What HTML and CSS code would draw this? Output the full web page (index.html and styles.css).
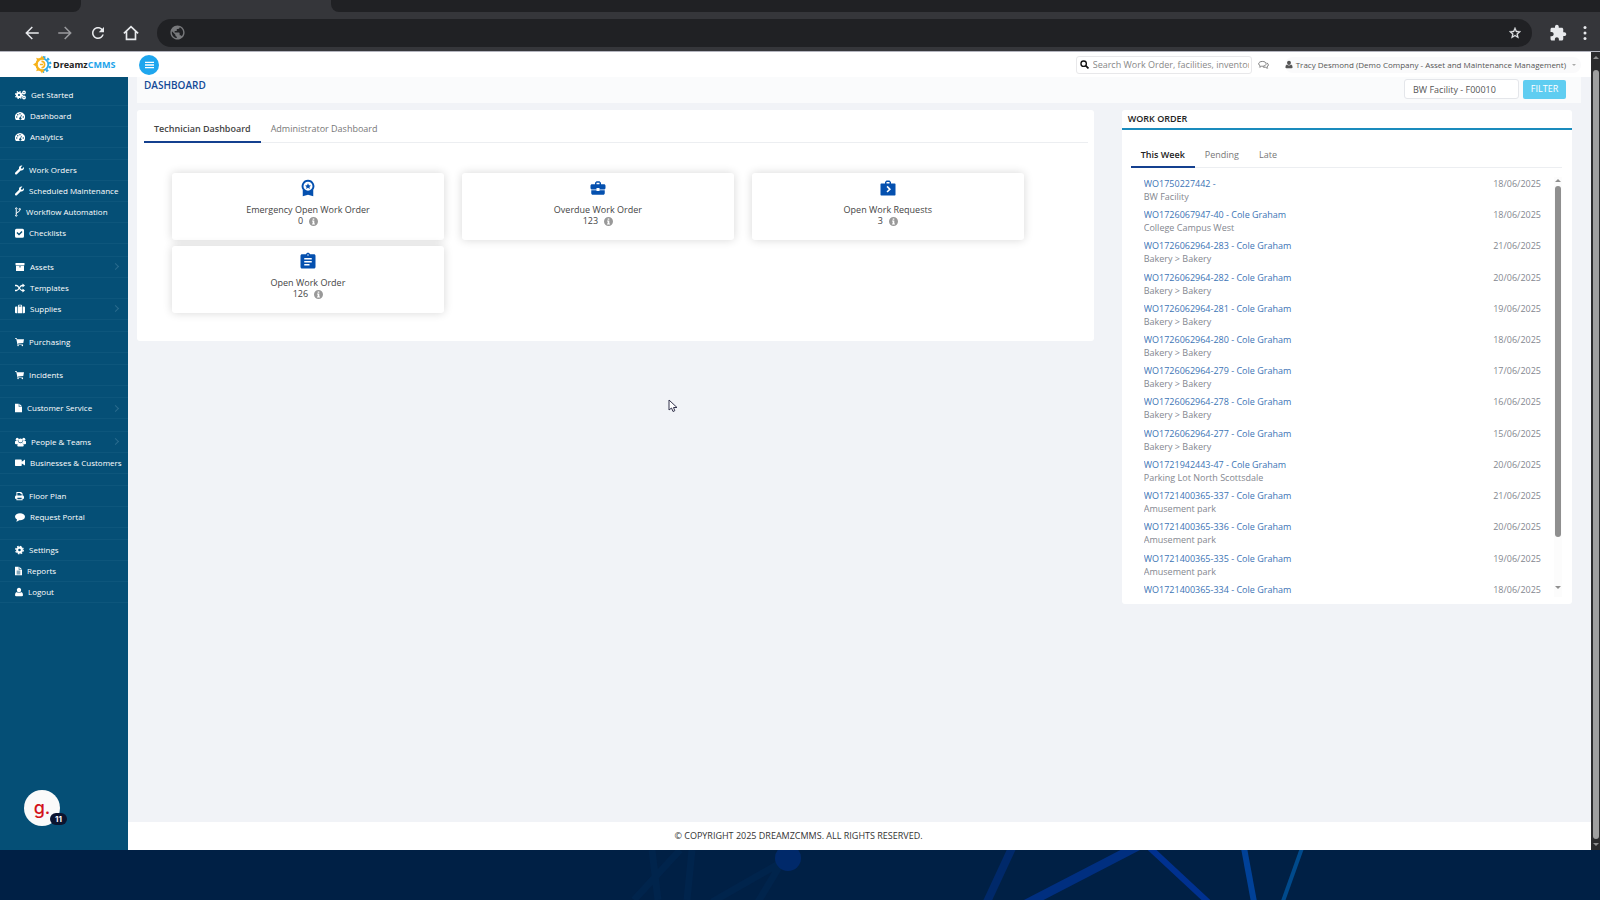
FILE: index.html
```
<!DOCTYPE html>
<html lang="en">
<head>
	<meta charset="UTF-8">
	<title>DreamzCMMS - Dashboard</title>
	<link rel="stylesheet" href="styles.css">
</head>
<body>
	<svg class="defs" aria-hidden="true">
		<symbol id="i-cogs" viewBox="0 0 22 20">
			<circle cx="8" cy="10" r="4.2" fill="none" stroke="currentColor" stroke-width="4"/>
			<circle cx="8" cy="10" r="7" fill="none" stroke="currentColor" stroke-width="2.4" stroke-dasharray="2.8 2.7"/>
			<circle cx="18" cy="5" r="2.5" fill="none" stroke="currentColor" stroke-width="2.6"/>
			<circle cx="18" cy="15" r="2.5" fill="none" stroke="currentColor" stroke-width="2.6"/>
		</symbol>
		<symbol id="i-dash" viewBox="0 0 20 20">
			<path fill="currentColor" fill-rule="evenodd" d="M10 2a10 10 0 0 0-8.500 15.500q.5.5 1 .5h15q.5 0 1-.5A10 10 0 0 0 10 2zM3.500 10.500a1.400 1.400 0 1 1 0 2.800 1.400 1.400 0 0 1 0-2.800zM5.500 6a1.400 1.400 0 1 1 0 2.800 1.400 1.400 0 0 1 0-2.800zM10 4a1.400 1.400 0 1 1 0 2.800A1.400 1.400 0 0 1 10 4zM16.500 10.500a1.400 1.400 0 1 1 0 2.800 1.400 1.400 0 0 1 0-2.800zM12.300 7.500l1.300.4-1.700 5.200a2.300 2.300 0 1 1-1.300-.4z"/>
		</symbol>
		<symbol id="i-wrench" viewBox="0 0 512 512">
			<path fill="currentColor" d="M507.730 109.100c-2.240-9.030-13.540-12.090-20.120-5.510l-74.360 74.360-67.880-11.310-11.310-67.880 74.360-74.360c6.620-6.620 3.430-17.900-5.660-20.160-47.380-11.740-99.550.91-136.580 37.930-39.640 39.640-50.550 97.100-34.050 147.200L18.740 402.760c-24.990 24.990-24.990 65.510 0 90.500 24.990 24.990 65.510 24.990 90.500 0l213.210-213.210c50.120 16.710 107.470 5.680 147.370-34.220 37.070-37.070 49.700-89.320 37.910-136.730z"/>
		</symbol>
		<symbol id="i-branch" viewBox="0 0 12 20">
			<g fill="none" stroke="currentColor" stroke-width="2"><circle cx="2.500" cy="3" r="1.500"/><circle cx="2.500" cy="17" r="1.500"/><circle cx="9.500" cy="4.500" r="1.500"/><path d="M2.500 5v10M9.500 6.500c0 4-6.500 3-7 7"/></g>
		</symbol>
		<symbol id="i-check" viewBox="0 0 18 20">
			<path fill="currentColor" fill-rule="evenodd" d="M3 1.500h12a3 3 0 0 1 3 3v12a3 3 0 0 1-3 3H3a3 3 0 0 1-3-3v-12a3 3 0 0 1 3-3zM3 10l5 5 7-7-2-2-5 5-3-3z"/>
		</symbol>
		<symbol id="i-archive" viewBox="0 0 20 20">
			<path fill="currentColor" fill-rule="evenodd" d="M1 2h18v4.500H1zM2 7.500h16V18H2zM8 9v1.600h4V9z"/>
		</symbol>
		<symbol id="i-random" viewBox="0 0 20 20">
			<path fill="none" stroke="currentColor" stroke-width="2.600" d="M0 5h3c5 0 6 10 11 10h2M0 15h3c5 0 6-10 11-10h2"/>
			<path fill="currentColor" d="M15 1l5 4-5 4zM15 11l5 4-5 4z"/>
		</symbol>
		<symbol id="i-case" viewBox="0 0 20 20">
			<path fill="currentColor" fill-rule="evenodd" d="M6 5V3q0-1.500 1.500-1.500h5Q14 1.500 14 3v2h.8v13.500H5.200V5zM7.600 5h4.800V3H7.600zM4 5v13.500H2q-2 0-2-2V7q0-2 2-2zM16 5v13.500h2q2 0 2-2V7q0-2-2-2z"/>
		</symbol>
		<symbol id="i-cart" viewBox="0 0 19 20">
			<path fill="currentColor" d="M0 2h4l.5 2H19l-1.500 8-11 1.200.3 1.300H17V16H5.300L2.800 3.600H0z"/>
			<circle cx="6.500" cy="17.500" r="1.600" fill="currentColor"/><circle cx="15.500" cy="17.500" r="1.600" fill="currentColor"/>
		</symbol>
		<symbol id="i-file" viewBox="0 0 15 20">
			<path fill="currentColor" d="M0 1h8v6.500h7V19H0zM9.300 1l5.700 5.300H9.300z"/>
		</symbol>
		<symbol id="i-filetext" viewBox="0 0 15 20">
			<path fill="currentColor" fill-rule="evenodd" d="M0 1h8v6.500h7V19H0zM9.300 1l5.700 5.300H9.300zM3.500 9.500V11h8V9.500zM3.500 12.500V14h8v-1.500zM3.500 15.500V17h8v-1.500z"/>
		</symbol>
		<symbol id="i-users" viewBox="0 0 22 20">
			<g fill="currentColor"><circle cx="4.500" cy="4.500" r="3"/><circle cx="17.500" cy="4.500" r="3"/><circle cx="11" cy="7" r="4"/><path d="M0 13V9q1-2 3-1.500h3.500q0 3.500 2 4.500-3.500.3-4 2.500H2q-2 0-2-1.500zM22 13V9q-1-2-3-1.500h-3.500q0 3.500-2 4.500 3.500.3 4 2.500H20q2 0 2-1.500zM4.500 17q0-5 4-5.500 2.500 1.500 5 0 4 .5 4 5.500 0 2-2 2h-9q-2 0-2-2z"/></g>
		</symbol>
		<symbol id="i-video" viewBox="0 0 20 20">
			<path fill="currentColor" d="M1 3h11q1.500 0 1.500 1.500v3L20 3v12l-6.500-4v3.500Q13.500 16 12 16H1q-1 0-1-1.500v-10Q0 3 1 3z"/>
		</symbol>
		<symbol id="i-print" viewBox="0 0 19 20">
			<path fill="currentColor" fill-rule="evenodd" d="M3 1.500h10L16 4.500V9q3 0 3 3v4h-3v3H3v-3H0v-4q0-3 3-3zM5 3.500V9h9V6h-2.500V3.500zM5 13.500V17h9v-3.500z"/>
		</symbol>
		<symbol id="i-comment" viewBox="0 0 20 20">
			<path fill="currentColor" d="M10 2.500c5.500 0 10 3 10 7s-4.500 7-10 7l-1.700-.1Q5.500 19 2 19.200q1.800-1.500 2-4Q0 13 0 9.500c0-4 4.500-7 10-7z"/>
		</symbol>
		<symbol id="i-cog" viewBox="0 0 18 20">
			<circle cx="9" cy="10" r="4.700" fill="none" stroke="currentColor" stroke-width="4.200"/>
			<circle cx="9" cy="10" r="7.500" fill="none" stroke="currentColor" stroke-width="2.600" stroke-dasharray="3.200 2.690"/>
		</symbol>
		<symbol id="i-user" viewBox="0 0 16 20">
			<path fill="currentColor" d="M8 1.500c2.500 0 4.300 2 4.300 4.500S10.500 11 8 11 3.700 8.500 3.700 6 5.500 1.500 8 1.500zM3.500 10q4.500 4 9 0 3.500 1 3.500 6 0 2.500-2.500 2.500h-11Q0 18.500 0 16q0-5 3.500-6z"/>
		</symbol>
		<symbol id="i-info" viewBox="0 0 20 20">
			<path fill="currentColor" fill-rule="evenodd" d="M10 0a10 10 0 1 1 0 20 10 10 0 0 1 0-20zM8.200 3.200v3h3.600v-3zM6.800 8v2h1.400v4.500H6.800v2h6.400v-2h-1.400V8z"/>
		</symbol>
		<symbol id="i-back" viewBox="0 0 24 24">
			<path fill="currentColor" d="M21 11H6.800l6.300-6.300L11.700 3.300 3 12l8.700 8.700 1.400-1.400L6.800 13H21z"/>
		</symbol>
	</svg>

	<header class="browser">
		<div class="tabstrip"><span class="tab-left"></span><span class="tab-active"></span><span class="tab-rest"></span></div>
		<div class="toolbar">
			<button class="nav-btn" aria-label="Back"><svg><use href="#i-back"/></svg></button>
			<button class="nav-btn forward" aria-label="Forward"><svg><use href="#i-back"/></svg></button>
			<button class="nav-btn" aria-label="Reload"><svg viewBox="0 0 24 24"><path fill="currentColor" d="M17.650 6.350C16.200 4.900 14.210 4 12 4c-4.420 0-7.990 3.580-7.990 8s3.570 8 7.990 8c3.730 0 6.840-2.550 7.730-6h-2.080c-.82 2.330-3.040 4-5.650 4-3.310 0-6-2.690-6-6s2.690-6 6-6c1.660 0 3.140.69 4.220 1.780L13 11h7V4l-2.350 2.350z"/></svg></button>
			<button class="nav-btn" aria-label="Home"><svg viewBox="0 0 24 24"><path fill="none" stroke="currentColor" stroke-width="2.200" d="M2.500 12.500L12 3.500l9.500 9M6 10v10.500h12V10"/></svg></button>
			<div class="urlbar">
				<svg class="globe" viewBox="0 0 24 24"><path fill="currentColor" d="M12 2C6.480 2 2 6.480 2 12s4.480 10 10 10 10-4.480 10-10S17.520 2 12 2zm-1 17.930c-3.950-.49-7-3.850-7-7.930 0-.62.08-1.210.21-1.790L9 15v1c0 1.100.9 2 2 2v1.930zm6.900-2.540c-.26-.81-1-1.390-1.900-1.390h-1v-3c0-.55-.45-1-1-1H8v-2h2c.55 0 1-.45 1-1V7h2c1.100 0 2-.9 2-2v-.41c2.930 1.190 5 4.060 5 7.410 0 2.080-.8 3.970-2.100 5.390z"/></svg>
				<svg class="star" viewBox="0 0 24 24"><path fill="currentColor" stroke="currentColor" stroke-width=".6" d="M22 9.240l-7.190-.62L12 2 9.190 8.630 2 9.240l5.460 4.730L5.820 21 12 17.270 18.180 21l-1.630-7.030L22 9.240zM12 15.400l-3.760 2.270 1-4.280-3.320-2.880 4.380-.38L12 6.100l1.710 4.040 4.380.38-3.320 2.880 1 4.280L12 15.400z"/></svg>
			</div>
			<svg class="ext" viewBox="0 0 24 24"><path fill="currentColor" d="M20.500 11H19V7c0-1.100-.9-2-2-2h-4V3.500C13 2.120 11.880 1 10.500 1S8 2.120 8 3.500V5H4c-1.100 0-1.990.9-1.990 2v3.800H3.500c1.490 0 2.700 1.210 2.700 2.700s-1.210 2.700-2.700 2.700H2V20c0 1.100.9 2 2 2h3.800v-1.500c0-1.490 1.210-2.700 2.700-2.700 1.490 0 2.700 1.210 2.700 2.700V22H17c1.100 0 2-.9 2-2v-4h1.500c1.380 0 2.500-1.120 2.500-2.500S21.880 11 20.500 11z"/></svg>
			<svg class="dots" viewBox="0 0 4 16"><g fill="currentColor"><circle cx="2" cy="2.500" r="1.500"/><circle cx="2" cy="8" r="1.500"/><circle cx="2" cy="13.500" r="1.500"/></g></svg>
		</div>
	</header>

	<div class="window">
		<div class="app">
			<div class="topbar">
				<a class="logo" href="#">
					<svg viewBox="0 0 36 36">
						<path fill="none" stroke="#29a9e8" stroke-width="3.500" d="M18 7a11 11 0 0 1 0 22"/>
						<path fill="none" stroke="#29a9e8" stroke-width="4" stroke-dasharray="4.500 3.800" d="M19 4a14 14 0 0 1 0 28"/>
						<path fill="none" stroke="#f6b21b" stroke-width="4.500" d="M21 7.500a11 11 0 1 0 0 21"/>
						<path fill="#f6b21b" d="M17 1l3 5h-6zM6 5l6 2-4 4zM0 18l6-4v8zM6 31l2-6 4 4zM17 35l-3-5h6z"/>
						<path fill="none" stroke="#f6b21b" stroke-width="3" d="M13 18h6M16 12a6 6 0 0 1 0 12"/>
					</svg>
					<span class="logo-dark">Dreamz</span><span class="logo-blue">CMMS</span>
				</a>
				<button class="menu" aria-label="Toggle menu"><svg viewBox="0 0 10 8"><path stroke="#fff" stroke-width="1.400" d="M0 1h10M0 4h10M0 7h10"/></svg></button>
				<label class="search">
					<svg viewBox="0 0 16 16"><circle cx="6.500" cy="6.500" r="4.800" fill="none" stroke="currentColor" stroke-width="2.400"/><path stroke="currentColor" stroke-width="3" d="M10 10l5 5"/></svg>
					<input type="text" aria-label="Search" placeholder="Search Work Order, facilities, inventor">
				</label>
				<svg class="chat" viewBox="0 0 20 16"><path fill="none" stroke="currentColor" stroke-width="1.500" d="M8 1.500c4 0 6.800 1.900 6.800 4.400S12 10.300 8 10.300l-1.500-.1q-1.500 1.500-3.700 1.700 1.200-1 1.200-2.500Q1.200 8 1.200 5.900C1.200 3.400 4 1.500 8 1.500z"/><path fill="none" stroke="currentColor" stroke-width="1.500" d="M16 4.200q2.800 1.300 2.800 3.600t-2.500 3.500q0 1.500 1.200 2.500-2.200-.2-3.700-1.700-3 .4-5-.7"/></svg>
				<button class="account">
					<svg><use href="#i-user"/></svg>
					<span>Tracy Desmond (Demo Company - Asset and Maintenance Management)</span>
					<i class="caret"></i>
				</button>
			</div>

			<div class="body">
				<aside class="sidebar">
					<nav>
						<ul>
							<li><a href="#"><svg width="11"><use href="#i-cogs"/></svg>Get Started</a></li>
							<li><a href="#"><svg width="10"><use href="#i-dash"/></svg>Dashboard</a></li>
							<li><a href="#"><svg width="10"><use href="#i-dash"/></svg>Analytics</a></li>
						</ul>
						<ul>
							<li><a href="#"><svg width="9"><use href="#i-wrench"/></svg>Work Orders</a></li>
							<li><a href="#"><svg width="9"><use href="#i-wrench"/></svg>Scheduled Maintenance</a></li>
							<li><a href="#"><svg width="6"><use href="#i-branch"/></svg>Workflow Automation</a></li>
							<li><a href="#"><svg width="9"><use href="#i-check"/></svg>Checklists</a></li>
						</ul>
						<ul>
							<li class="sub"><a href="#"><svg width="10"><use href="#i-archive"/></svg>Assets</a></li>
							<li><a href="#"><svg width="10"><use href="#i-random"/></svg>Templates</a></li>
							<li class="sub"><a href="#"><svg width="10"><use href="#i-case"/></svg>Supplies</a></li>
						</ul>
						<ul>
							<li><a href="#"><svg width="9"><use href="#i-cart"/></svg>Purchasing</a></li>
						</ul>
						<ul>
							<li><a href="#"><svg width="9"><use href="#i-cart"/></svg>Incidents</a></li>
						</ul>
						<ul>
							<li class="sub"><a href="#"><svg width="7"><use href="#i-file"/></svg>Customer Service</a></li>
						</ul>
						<ul>
							<li class="sub"><a href="#"><svg width="11"><use href="#i-users"/></svg>People &amp; Teams</a></li>
							<li><a href="#"><svg width="10"><use href="#i-video"/></svg>Businesses &amp; Customers</a></li>
						</ul>
						<ul>
							<li><a href="#"><svg width="9"><use href="#i-print"/></svg>Floor Plan</a></li>
							<li><a href="#"><svg width="10"><use href="#i-comment"/></svg>Request Portal</a></li>
						</ul>
						<ul>
							<li><a href="#"><svg width="9"><use href="#i-cog"/></svg>Settings</a></li>
							<li><a href="#"><svg width="7"><use href="#i-filetext"/></svg>Reports</a></li>
							<li><a href="#"><svg width="8"><use href="#i-user"/></svg>Logout</a></li>
						</ul>
					</nav>
					<button class="helper" aria-label="Help">g.<span class="badge">11</span></button>
				</aside>

				<main>
					<div class="titlebar">
						<h1>DASHBOARD</h1>
						<form class="filter">
							<input type="text" aria-label="Facility" value="BW Facility - F00010">
							<button type="button">FILTER</button>
						</form>
					</div>

					<div class="columns">
						<section class="panel tech">
							<div class="tabs">
								<button class="active">Technician Dashboard</button>
								<button>Administrator Dashboard</button>
							</div>
							<div class="cards">
								<div class="card">
									<svg viewBox="0 0 24 24"><path fill="currentColor" fill-rule="evenodd" d="M12 1a8.500 8.500 0 0 1 7 13.300V23l-7-2-7 2v-8.700A8.500 8.500 0 0 1 12 1zm0 2.500a6 6 0 1 0 0 12 6 6 0 0 0 0-12zm0 2.300l1.200 2.500 2.700.3-2 1.900.6 2.700-2.500-1.400-2.500 1.400.6-2.700-2-1.900 2.700-.3z"/></svg>
									<h2>Emergency Open Work Order</h2>
									<p>0 <svg><use href="#i-info"/></svg></p>
								</div>
								<div class="card">
									<svg viewBox="0 0 24 24"><path fill="currentColor" d="M10 16v-1H3.010L3 19c0 1.110.89 2 2 2h14c1.110 0 2-.89 2-2v-4h-7v1h-4zm10-9h-4.010V5l-2-2h-4l-2 2v2H4c-1.100 0-2 .9-2 2v3c0 1.110.89 2 2 2h6v-2h4v2h6c1.100 0 2-.9 2-2V9c0-1.100-.9-2-2-2zm-6 0h-4V5h4v2z"/></svg>
									<h2>Overdue Work Order</h2>
									<p>123 <svg><use href="#i-info"/></svg></p>
								</div>
								<div class="card">
									<svg viewBox="0 0 24 24"><path fill="currentColor" fill-rule="evenodd" d="M8 6V4l2-2h4l2 2v2h5q1 0 1 1v14q0 1-1 1H3q-1 0-1-1V7q0-1 1-1zm2 0h4V4h-4zm0 4.500l3 3-3 3 1.500 1.500 4.500-4.500L11.500 9z"/></svg>
									<h2>Open Work Requests</h2>
									<p>3 <svg><use href="#i-info"/></svg></p>
								</div>
								<div class="card">
									<svg viewBox="0 0 24 24"><path fill="currentColor" d="M20 3h-5.180C14.400 1.840 13.300 1 12 1c-1.300 0-2.400.84-2.820 2H4c-1.100 0-2 .9-2 2v15c0 1.100.9 2 2 2h16c1.100 0 2-.9 2-2V5c0-1.100-.9-2-2-2zm-8 0c.55 0 1 .45 1 1s-.45 1-1 1-1-.45-1-1 .45-1 1-1zm2 15H7v-2h7v2zm3-4H7v-2h10v2zm0-4H7V8h10v2z"/></svg>
									<h2>Open Work Order</h2>
									<p>126 <svg><use href="#i-info"/></svg></p>
								</div>
							</div>
						</section>

						<section class="panel orders">
							<h2 class="panel-title">WORK ORDER</h2>
							<div class="tabs">
								<button class="active">This Week</button>
								<button>Pending</button>
								<button>Late</button>
							</div>
							<div class="scroller">
								<ul class="order-list">
									<li><a href="#">WO1750227442 -</a><time>18/06/2025</time><p>BW Facility</p></li>
									<li><a href="#">WO1726067947-40 - Cole Graham</a><time>18/06/2025</time><p>College Campus West</p></li>
									<li><a href="#">WO1726062964-283 - Cole Graham</a><time>21/06/2025</time><p>Bakery &gt; Bakery</p></li>
									<li><a href="#">WO1726062964-282 - Cole Graham</a><time>20/06/2025</time><p>Bakery &gt; Bakery</p></li>
									<li><a href="#">WO1726062964-281 - Cole Graham</a><time>19/06/2025</time><p>Bakery &gt; Bakery</p></li>
									<li><a href="#">WO1726062964-280 - Cole Graham</a><time>18/06/2025</time><p>Bakery &gt; Bakery</p></li>
									<li><a href="#">WO1726062964-279 - Cole Graham</a><time>17/06/2025</time><p>Bakery &gt; Bakery</p></li>
									<li><a href="#">WO1726062964-278 - Cole Graham</a><time>16/06/2025</time><p>Bakery &gt; Bakery</p></li>
									<li><a href="#">WO1726062964-277 - Cole Graham</a><time>15/06/2025</time><p>Bakery &gt; Bakery</p></li>
									<li><a href="#">WO1721942443-47 - Cole Graham</a><time>20/06/2025</time><p>Parking Lot North Scottsdale</p></li>
									<li><a href="#">WO1721400365-337 - Cole Graham</a><time>21/06/2025</time><p>Amusement park</p></li>
									<li><a href="#">WO1721400365-336 - Cole Graham</a><time>20/06/2025</time><p>Amusement park</p></li>
									<li><a href="#">WO1721400365-335 - Cole Graham</a><time>19/06/2025</time><p>Amusement park</p></li>
									<li><a href="#">WO1721400365-334 - Cole Graham</a><time>18/06/2025</time></li>
								</ul>
								<div class="scrollbar"><i class="up"></i><span class="thumb"></span><i class="down"></i></div>
							</div>
						</section>
					</div>

					<footer>© COPYRIGHT 2025 DREAMZCMMS. ALL RIGHTS RESERVED.</footer>
				</main>
			</div>
		</div>
		<div class="scrollbar page-scroll"><i class="up"></i><span class="thumb"></span><i class="down"></i></div>
	</div>

	<svg class="backdrop" viewBox="0 0 1600 50" preserveAspectRatio="xMidYMid slice">
		<g fill="none">
			<path stroke="#00244c" stroke-width="7" d="M652 0l6 50M692 0l-5 50M782 12l-70 40M782 12l-24 40M680 0l-46 50"/>
			<circle cx="788" cy="8" r="13" fill="#00296a"/>
			<path stroke="#00296a" stroke-width="8" d="M1012-2l-26 56"/>
			<path stroke="#002f80" stroke-width="9" d="M1138-4l-112 58"/>
			<path stroke="#003190" stroke-width="6" d="M1150-2l58 54"/>
			<path stroke="#004198" stroke-width="6" d="M1244-2l10 54"/>
			<path stroke="#004a8c" stroke-width="4" d="M1302-2l-20 56"/>
		</g>
	</svg>

	<svg class="cursor" viewBox="0 0 10 14"><path fill="#fff" stroke="#33334d" d="M1 1v10l2.500-2 1.500 3.500 1.800-.8L5.500 8.500H9z"/></svg>
</body>
</html>
```
FILE: styles.css
```
* {
	box-sizing:border-box;
}
body {
	margin:0;
	min-height:100vh;
	display:flex;
	flex-direction:column;
	background:#002045;
	color:#555;
	font-family:"Open Sans", "Noto Sans", sans-serif;
	font-size:9px;
	line-height:12px;
}
ul, h1, h2, p {
	margin:0;
	padding:0;
	list-style:none;
}
a {
	text-decoration:none;
}
button, input {
	font-family:inherit;
	font-size:inherit;
	line-height:inherit;
	border:0;
	padding:0;
	background:none;
	color:inherit;
}
svg {
	display:block;
	flex:none;
}
.defs {
	position:absolute;
	width:0;
	height:0;
}

/* browser */
.browser {
	background:#35363a;
	border-bottom:1px solid #b4b5bf;
}
.tabstrip {
	display:flex;
	height:12px;
}
.tab-left {
	width:81px;
	background:#202124;
	border-radius:0 0 8px 0;
}
.tab-active {
	width:250px;
}
.tab-rest {
	flex:1;
	background:#202124;
	border-radius:0 0 0 8px;
}
.toolbar {
	display:flex;
	align-items:center;
	height:39px;
	padding:2px 13px 0 23px;
	color:#e8eaed;
}
.nav-btn {
	margin-right:15px;
}
.nav-btn:nth-child(4) {
	margin-right:17px;
}
.nav-btn svg {
	width:18px;
	height:18px;
}
.forward {
	color:#9a9b9e;
	transform:scaleX(-1);
}
.urlbar {
	flex:1;
	display:flex;
	align-items:center;
	justify-content:space-between;
	height:28px;
	padding:0 10px 0 12px;
	border-radius:14px;
	background:#202124;
}
.globe {
	width:17px;
	height:17px;
	color:#77787b;
}
.star {
	width:14px;
	height:14px;
}
.ext {
	width:18px;
	height:18px;
	margin:0 16px 0 17px;
}
.dots {
	width:4px;
	height:16px;
}

/* page */
.window {
	flex:1;
	display:flex;
}
.app {
	flex:1;
	min-width:0;
	display:flex;
	flex-direction:column;
	background:#f1f3f7;
}
.topbar {
	display:flex;
	align-items:center;
	height:25px;
	padding-right:10px;
	background:#fff;
}
.logo {
	display:flex;
	align-items:center;
	width:139px;
	padding-left:33px;
	font-size:9px;
	font-weight:bold;
}
.logo svg {
	width:19px;
	height:19px;
	margin-right:1px;
}
.logo-dark {
	color:#222;
}
.logo-blue {
	color:#1ca3ea;
}
.menu {
	display:flex;
	align-items:center;
	justify-content:center;
	width:20px;
	height:20px;
	border-radius:50%;
	background:#1ea6ee;
}
.menu svg {
	width:9px;
	height:8px;
}
.search {
	display:flex;
	align-items:center;
	gap:4px;
	width:176px;
	height:18px;
	margin-left:auto;
	padding:0 2px 0 3px;
	border:1px solid #e8e8ea;
	border-radius:3px;
	color:#111;
}
.search svg {
	width:9px;
	height:9px;
}
.search input {
	flex:1;
	min-width:0;
}
.search input::placeholder {
	color:#888;
}
.chat {
	width:11px;
	height:10px;
	margin:0 16px 0 6px;
	color:#666;
}
.account {
	display:flex;
	align-items:center;
	gap:3px;
	height:16px;
	padding:0 5px 0 0;
	border-radius:8px;
	background:#fafafb;
	color:#555;
	font-size:8px;
}
.account svg {
	width:8px;
	height:9px;
}
.caret {
	margin-left:3px;
	border:2px solid transparent;
	border-top-color:#aaa;
	border-bottom:0;
}
.body {
	flex:1;
	display:flex;
}

/* sidebar */
.sidebar {
	position:relative;
	width:128px;
	padding-top:8px;
	background:#054f76;
	font-size:8px;
}
.sidebar nav {
	display:flex;
	flex-direction:column;
	justify-content:space-between;
	min-height:518px;
}
.sidebar ul + ul {
	border-top:1px solid #0d567c;
}
.sidebar li {
	display:flex;
	align-items:center;
	height:21px;
	border-bottom:1px solid #0d567c;
}
.sidebar a {
	flex:1;
	display:flex;
	align-items:center;
	gap:5px;
	padding-left:15px;
	color:#fff;
	white-space:nowrap;
}
.sidebar a svg {
	height:10px;
}
.sidebar .sub::after {
	content:"";
	width:4px;
	height:4px;
	margin-right:10px;
	border:solid #2a6b8e;
	border-width:1px 1px 0 0;
	transform:rotate(45deg);
}
.helper {
	position:absolute;
	left:24px;
	bottom:24px;
	width:36px;
	height:36px;
	border-radius:50%;
	background:#fafafa;
	color:#d3121b;
	font-family:Inter, sans-serif;
	font-size:18px;
	font-weight:500;
}
.badge {
	position:absolute;
	right:-7px;
	bottom:1px;
	width:17px;
	height:12px;
	border-radius:6px;
	background:#0b1430;
	color:#fff;
	font-size:8px;
	font-weight:bold;
}

/* main */
main {
	flex:1;
	min-width:0;
	display:flex;
	flex-direction:column;
}
.titlebar {
	display:flex;
	justify-content:space-between;
	height:26px;
	margin:0 10px 0 9px;
	padding:2px 15px 0 7px;
	background:#fafbfc;
}
.titlebar h1 {
	font-size:10px;
	font-weight:600;
	color:#134a97;
}
.filter {
	display:flex;
	align-items:center;
	gap:4px;
	height:20px;
}
.filter input {
	width:115px;
	height:20px;
	padding:0 8px;
	border:1px solid #e4e6ea;
	border-radius:3px;
	background:#fff;
}
.filter button {
	width:43px;
	height:19px;
	border-radius:2px;
	background:#5fcdf1;
	color:#fff;
}
.columns {
	display:grid;
	grid-template-columns:17fr 8fr;
	align-items:start;
	gap:28px;
	margin:7px 19px 0 9px;
}
.panel {
	border-radius:3px;
	background:#fff;
}
.tabs {
	display:flex;
	border-bottom:1px solid #eceef1;
}
.tabs button {
	margin-bottom:-1px;
	padding:0 10px;
	border-bottom:2px solid transparent;
	color:#777;
}
.tabs .active {
	border-bottom-color:#14408f;
	color:#444;
	font-weight:600;
}
.tech {
	padding:0 6px 28px 7px;
}
.tech .tabs button {
	height:33px;
	padding-top:6px;
}
.cards {
	display:grid;
	grid-template-columns:repeat(3, 1fr);
	gap:6px 18px;
	padding:30px 64px 0 28px;
}
.card {
	display:flex;
	flex-direction:column;
	align-items:center;
	height:67px;
	padding-top:6px;
	border-radius:3px;
	background:#fff;
	box-shadow:0 0 10px rgba(0,0,0,.16);
	color:#444;
}
.card > svg {
	width:18px;
	height:18px;
	margin-bottom:7px;
	color:#0450af;
}
.card h2 {
	font-size:9px;
	font-weight:normal;
}
.card p {
	display:flex;
	align-items:center;
	gap:6px;
	line-height:10px;
}
.card p svg {
	width:9px;
	height:9px;
	color:#999;
}
.orders {
	padding-bottom:7px;
}
.panel-title {
	padding:3px 6px;
	border-bottom:2px solid #1a8bbd;
	font-size:9px;
	font-weight:600;
	color:#222;
}
.orders .tabs {
	margin:14px 10px 0 9px;
}
.orders .tabs button {
	height:24px;
}
.orders .tabs .active {
	color:#222;
}
.scroller {
	display:flex;
	gap:13px;
	height:420px;
	margin:9px 10px 0 22px;
	overflow:hidden;
}
.order-list {
	flex:1;
	display:grid;
	grid-auto-rows:1fr;
	height:437px;
	color:#84878f;
}
.order-list li {
	display:grid;
	grid-template-columns:1fr auto;
	align-content:start;
	line-height:13px;
}
.order-list a {
	color:#3c74b5;
}

/* scrollbars */
.scrollbar {
	display:flex;
	flex-direction:column;
	align-items:center;
	width:8px;
	background:#fcfcfc;
}
.scrollbar .thumb {
	width:6px;
	height:351px;
	margin-top:4px;
	border-radius:3px;
	background:#8f8f8f;
}
.up, .down {
	border:3px solid transparent;
}
.up {
	border-top:0;
	border-bottom-color:#8f8f8f;
	margin-top:2px;
}
.down {
	border-bottom:0;
	border-top-color:#8f8f8f;
	margin:auto 0 8px;
}
.page-scroll {
	width:9px;
	background:#2b2b2c;
}
.page-scroll .up {
	margin-top:4px;
}
.page-scroll .thumb {
	flex:1;
	height:auto;
	margin-top:11px;
	margin-bottom:4px;
	background:#9f9f9f;
}
.page-scroll .down {
	margin-bottom:4px;
}
footer {
	margin-top:auto;
	padding:8px 122px 8px 0;
	background:#fff;
	text-align:center;
	color:#333;
}

.backdrop {
	width:100%;
	height:50px;
}
.cursor {
	position:absolute;
	left:668px;
	top:399px;
	width:10px;
	height:14px;
}
```
